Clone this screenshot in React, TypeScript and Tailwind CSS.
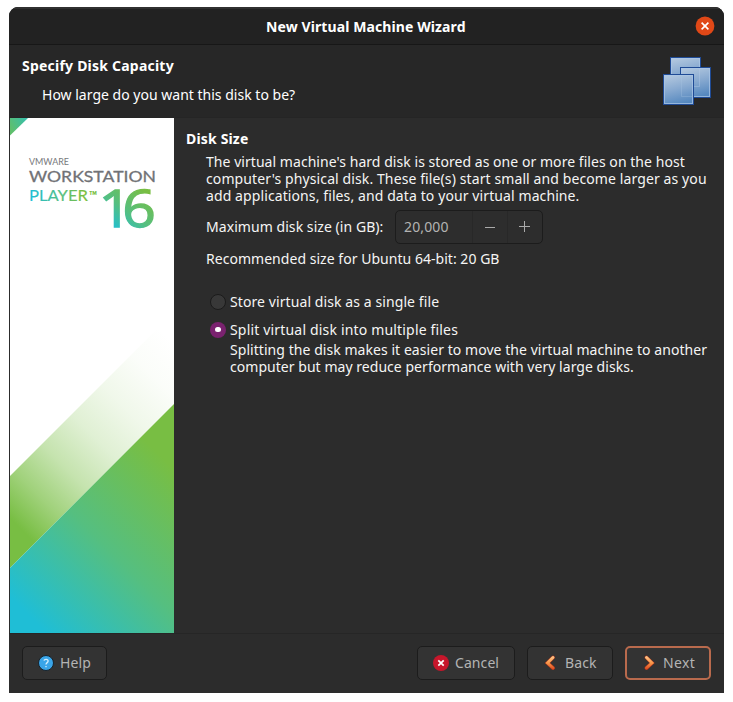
import type { ReactNode } from "react";

function Sidebar() {
  return (
    <svg width="164" height="515" viewBox="0 0 164 515" className="block shrink-0 bg-white">
      <defs>
        <linearGradient id="corner" gradientUnits="userSpaceOnUse" x1="0" y1="10" x2="18" y2="0">
          <stop offset="0" stopColor="#5fbf6c" />
          <stop offset="1" stopColor="#35bfb0" />
        </linearGradient>
        <linearGradient id="wedge" gradientUnits="userSpaceOnUse" x1="18" y1="497" x2="164" y2="351">
          <stop offset="0" stopColor="#1fbed6" />
          <stop offset="0.5" stopColor="#55bf80" />
          <stop offset="1" stopColor="#78be43" />
        </linearGradient>
        <linearGradient id="band" gradientUnits="userSpaceOnUse" x1="0" y1="400" x2="170" y2="230">
          <stop offset="0" stopColor="#78be43" />
          <stop offset="0.15" stopColor="#78be43" stopOpacity="0.7" />
          <stop offset="0.31" stopColor="#78be43" stopOpacity="0.43" />
          <stop offset="0.485" stopColor="#78be43" stopOpacity="0.23" />
          <stop offset="0.66" stopColor="#78be43" stopOpacity="0.11" />
          <stop offset="0.84" stopColor="#78be43" stopOpacity="0.03" />
          <stop offset="1" stopColor="#78be43" stopOpacity="0" />
        </linearGradient>
        <linearGradient id="player" gradientUnits="userSpaceOnUse" x1="20" y1="0" x2="86" y2="0">
          <stop offset="0" stopColor="#1fbed6" />
          <stop offset="0.55" stopColor="#5fbf74" />
          <stop offset="0.8" stopColor="#78be43" />
        </linearGradient>
        <linearGradient id="sixteen" gradientUnits="userSpaceOnUse" x1="14" y1="2" x2="44" y2="-34">
          <stop offset="0" stopColor="#22bfd0" />
          <stop offset="0.45" stopColor="#55bf80" />
          <stop offset="1" stopColor="#78be43" />
        </linearGradient>
      </defs>
      <path d="M0 0H18L0 17.5Z" fill="url(#corner)" />
      <path d="M0 358L164 194V286L0 450Z" fill="url(#band)" />
      <path d="M0 450L164 286V515H0Z" fill="url(#wedge)" />
      <g className="font-['Lato',sans-serif]">
        <text x="19" y="47" fontSize="9.3" fill="#77787b" textLength="40" lengthAdjust="spacingAndGlyphs">VMWARE</text>
        <text x="19" y="64.300" fontSize="16" fill="#717276" stroke="#717276" strokeWidth="0.3" textLength="127" lengthAdjust="spacingAndGlyphs">WORKSTATION</text>
        <text x="19" y="83.300" fontSize="14.8" fill="url(#player)" stroke="url(#player)" strokeWidth="0.15" textLength="59" lengthAdjust="spacingAndGlyphs">PLAYER</text>
        <text x="79" y="83" fontSize="14" fontWeight="700" fill="#78be43" textLength="8" lengthAdjust="spacingAndGlyphs">™</text>
      </g>
      <text transform="translate(88.5 109.2) scale(1.13 1)" fontSize="52" letterSpacing="-8.700" fill="url(#sixteen)" stroke="url(#sixteen)" strokeWidth="1.300" className="font-['Open_Sans',sans-serif]">16</text>
    </svg>
  );
}

function Cube({ x, y, fill }: { x: number; y: number; fill: string }) {
  return (
    <g>
      <rect x={x + 0.5} y={y + 0.5} width="30" height="30" fill={fill} stroke="#1f4b96" />
      <rect x={x + 1.5} y={y + 1.5} width="28" height="28" fill="none" stroke="#a9c6e6" strokeOpacity="0.75" />
    </g>
  );
}

function MachinesIcon() {
  return (
    <svg width="48" height="48" viewBox="0 0 48 48" className="mt-3 mr-[13px] shrink-0">
      <defs>
        <linearGradient id="glass" x1="0.25" y1="0" x2="0.5" y2="1">
          <stop offset="0" stopColor="#b3c8df" />
          <stop offset="0.5" stopColor="#87a9d0" />
          <stop offset="1" stopColor="#5588bf" />
        </linearGradient>
      </defs>
      <Cube x={7} y={0} fill="url(#glass)" />
      <Cube x={17} y={10} fill="url(#glass)" />
      <path d="M18 29.500H36.500V12" fill="none" stroke="#bdd2ea" strokeOpacity="0.35" />
      <Cube x={0} y={17} fill="url(#glass)" />
      <path d="M18.500 18V39.500H29" fill="none" stroke="#a9c6e6" strokeOpacity="0.3" />
    </svg>
  );
}

function Button({ children, className }: { children: ReactNode; className: string }) {
  return (
    <button className={`flex h-[34px] items-center rounded-[5px] bg-[#333333] text-[#b4b4b3] ${className}`}>
      {children}
    </button>
  );
}

function HelpIcon() {
  return (
    <svg width="16" height="16" viewBox="0 0 16 16">
      <circle cx="8" cy="8" r="7.500" fill="#3aa5e8" stroke="#17232c" />
      <path d="M6 5.700C6.300 3.900 10.200 3.900 10.100 6.100C10 7.700 8 7.600 8 9.500M8 10.900V12.200" fill="none" stroke="#d3edfc" strokeWidth="1.300" />
    </svg>
  );
}

function CancelIcon() {
  return (
    <svg width="16" height="16" viewBox="0 0 16 16">
      <circle cx="8" cy="8" r="8" fill="#c7162b" />
      <path d="M5.300 5.300L10.700 10.700M10.700 5.300L5.300 10.700" stroke="#fff" strokeWidth="1.700" />
    </svg>
  );
}

function Chevron({ d }: { d: string }) {
  return (
    <svg width="12" height="16" viewBox="0 0 12 16">
      <defs>
        <linearGradient id="ember" gradientUnits="userSpaceOnUse" x1="0" y1="1" x2="0" y2="15">
          <stop offset="0" stopColor="#fdc88c" />
          <stop offset="0.5" stopColor="#f8974a" />
          <stop offset="1" stopColor="#d8401a" />
        </linearGradient>
      </defs>
      <path d={d} fill="none" stroke="#a8341a" strokeWidth="3.800" strokeLinecap="round" />
      <path d={d} fill="none" stroke="url(#ember)" strokeWidth="2.900" strokeLinecap="round" />
    </svg>
  );
}

export default function App() {
  return (
    <div className="h-[702px] w-[733px] overflow-hidden bg-white pt-[7px] pl-[9px] font-['Noto_Sans',sans-serif] text-[14px] leading-[17px] whitespace-nowrap text-[#f5f5f4]">
      <div className="flex h-[686px] w-[715px] flex-col overflow-hidden rounded-t-[9px] bg-[#2c2c2c]">
        <header className="flex h-[38px] shrink-0 items-center border-t-2 border-b border-t-[#303030] border-b-[#171717] bg-[#222222]">
          <h1 className="flex-1 pl-[257px] font-bold tracking-[0.1px] text-white">New Virtual Machine Wizard</h1>
          <svg width="20" height="20" viewBox="0 0 20 20" className="mr-[9px] mb-px">
            <circle cx="10" cy="10" r="9.400" fill="#e04817" />
            <path d="M6.600 6.600L13.400 13.400M13.400 6.600L6.600 13.400" stroke="#fff" strokeWidth="1.600" />
          </svg>
        </header>

        <section className="flex h-[73px] shrink-0 justify-between border-b border-[#252525] bg-[#272727]">
          <div className="pt-3 pl-[13px] text-white">
            <h2 className="font-bold tracking-[0.22px]">Specify Disk Capacity</h2>
            <p className="mt-3 ml-5 tracking-[0.01px]">How large do you want this disk to be?</p>
          </div>
          <MachinesIcon />
        </section>

        <main className="flex h-[515px] shrink-0 pl-px">
          <Sidebar />
          <div className="pt-3 pl-3">
            <h3 className="font-bold tracking-[0.17px] text-white">Disk Size</h3>
            <div className="pt-[6px] pl-5">
              <p className="tracking-[0.046px]">The virtual machine's hard disk is stored as one or more files on the host</p>
              <p className="tracking-[0.105px]">computer's physical disk. These file(s) start small and become larger as you</p>
              <p className="tracking-[0.1px]">add applications, files, and data to your virtual machine.</p>
              <div className="mt-[6px] flex items-center">
                <span className="w-[189px] pb-[2px] tracking-[0.06px]">Maximum disk size (in GB):</span>
                <div className="flex h-[34px] w-[148px] items-center rounded-[5px] border border-[#1c1c1c] bg-[#2d2d2d] text-[#b3b3b2]">
                  <span className="flex-1 pb-[2px] pl-2 tracking-[0.12px]">20,000</span>
                  <span className="flex h-full w-[35px] items-center justify-center border-l border-[#282828]">
                    <span className="h-px w-[10px] bg-[#aaaaaa]" />
                  </span>
                  <span className="flex h-full w-[35px] items-center border-l border-[#282828] pb-px pl-[11px]">
                    <svg width="11" height="11" viewBox="0 0 11 11">
                      <path d="M5.500 0V11M0 5.500H11" stroke="#aaaaaa" />
                    </svg>
                  </span>
                </div>
              </div>
              <p className="mt-[6px] tracking-[0.035px]">Recommended size for Ubuntu 64-bit: 20 GB</p>
              <div className="mt-[26px] flex items-center pl-1">
                <span className="h-4 w-4 rounded-full border border-[#1b1b1b] bg-[#383838]" />
                <span className="ml-1 tracking-[0.09px]">Store virtual disk as a single file</span>
              </div>
              <div className="mt-[11px] flex items-center pl-1">
                <span className="flex h-4 w-4 items-center justify-center rounded-full bg-[#7a226f]">
                  <span className="h-[5.5px] w-[5.5px] rounded-full bg-white" />
                </span>
                <span className="ml-1 tracking-[0.175px]">Split virtual disk into multiple files</span>
              </div>
              <div className="mt-[3px] pl-6">
                <p className="tracking-[0.054px]">Splitting the disk makes it easier to move the virtual machine to another</p>
                <p className="tracking-[0.04px]">computer but may reduce performance with very large disks.</p>
              </div>
            </div>
          </div>
        </main>

        <footer className="flex flex-1 items-start border-t border-[#262626] px-[13px] pt-3">
          <Button className="w-[85px] border border-[#1c1c1c] pl-[15px]">
            <HelpIcon />
            <span className="ml-[6px] pb-[2px] tracking-[0.1px]">Help</span>
          </Button>
          <Button className="ml-auto w-[98px] border border-[#1c1c1c] pl-[15px]">
            <CancelIcon />
            <span className="ml-[6px] pb-[2px] tracking-[0.08px]">Cancel</span>
          </Button>
          <Button className="ml-3 w-[86px] border border-[#1c1c1c] pl-4">
            <Chevron d="M9 2.500L3.500 8L9 13" />
            <span className="ml-[9px] pb-[2px] tracking-[0.1px]">Back</span>
          </Button>
          <Button className="ml-3 w-[86px] border-2 border-[#b96a4d] pl-4">
            <Chevron d="M3.500 2.500L9 8L3.500 13" />
            <span className="ml-2 pb-[2px] tracking-[0.4px]">Next</span>
          </Button>
        </footer>
      </div>
    </div>
  );
}
